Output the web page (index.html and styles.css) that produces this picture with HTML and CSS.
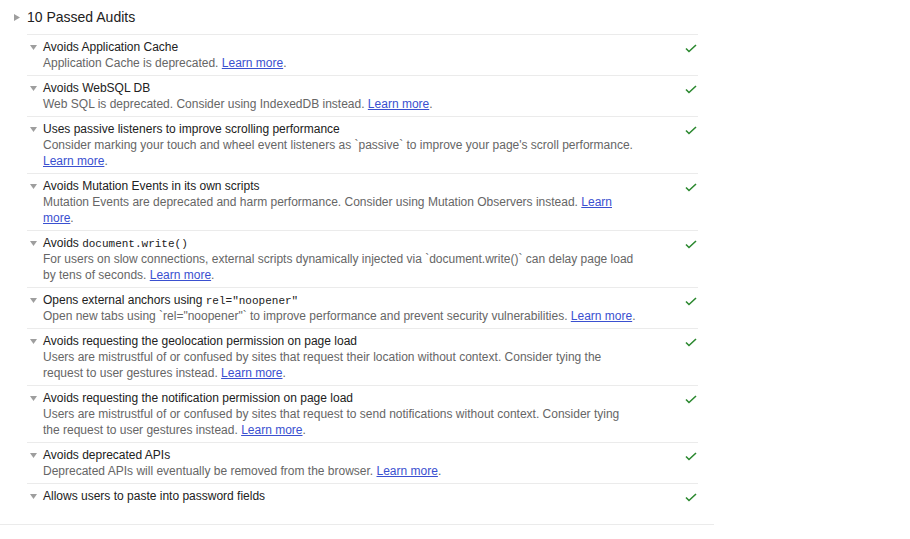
FILE: index.html
```html
<!DOCTYPE html>
<html>
<head>
<meta charset="utf-8">
<link rel="stylesheet" href="styles.css">
</head>
<body>
<div class="group">
  <div class="group-header">
    <svg class="tri-right" width="6" height="7" viewBox="0 0 6 7"><polygon points="0,0 6,3.5 0,7" fill="#9e9e9e"/></svg>
    <span class="group-title">10 Passed Audits</span>
  </div>
  <div class="audits">
    <div class="audit">
      <svg class="tri-down" width="7" height="5" viewBox="0 0 7 5"><polygon points="0,0 7,0 3.5,5" fill="#9e9e9e"/></svg>
      <div class="text">
        <div class="title">Avoids Application Cache</div>
        <div class="desc">Application Cache is deprecated. <a href="#">Learn more</a>.</div>
      </div>
      <svg class="check" width="12" height="9" viewBox="0 0 12 9"><path d="M1 4.5 L4 7.5 L11 1" fill="none" stroke="#2b882f" stroke-width="1.6"/></svg>
    </div>
    <div class="audit">
      <svg class="tri-down" width="7" height="5" viewBox="0 0 7 5"><polygon points="0,0 7,0 3.5,5" fill="#9e9e9e"/></svg>
      <div class="text">
        <div class="title">Avoids WebSQL DB</div>
        <div class="desc">Web SQL is deprecated. Consider using IndexedDB instead. <a href="#">Learn more</a>.</div>
      </div>
      <svg class="check" width="12" height="9" viewBox="0 0 12 9"><path d="M1 4.5 L4 7.5 L11 1" fill="none" stroke="#2b882f" stroke-width="1.6"/></svg>
    </div>
    <div class="audit">
      <svg class="tri-down" width="7" height="5" viewBox="0 0 7 5"><polygon points="0,0 7,0 3.5,5" fill="#9e9e9e"/></svg>
      <div class="text">
        <div class="title">Uses passive listeners to improve scrolling performance</div>
        <div class="desc">Consider marking your touch and wheel event listeners as `passive` to improve your page's scroll performance. <a href="#">Learn more</a>.</div>
      </div>
      <svg class="check" width="12" height="9" viewBox="0 0 12 9"><path d="M1 4.5 L4 7.5 L11 1" fill="none" stroke="#2b882f" stroke-width="1.6"/></svg>
    </div>
    <div class="audit">
      <svg class="tri-down" width="7" height="5" viewBox="0 0 7 5"><polygon points="0,0 7,0 3.5,5" fill="#9e9e9e"/></svg>
      <div class="text">
        <div class="title">Avoids Mutation Events in its own scripts</div>
        <div class="desc">Mutation Events are deprecated and harm performance. Consider using Mutation Observers instead. <a href="#">Learn more</a>.</div>
      </div>
      <svg class="check" width="12" height="9" viewBox="0 0 12 9"><path d="M1 4.5 L4 7.5 L11 1" fill="none" stroke="#2b882f" stroke-width="1.6"/></svg>
    </div>
    <div class="audit">
      <svg class="tri-down" width="7" height="5" viewBox="0 0 7 5"><polygon points="0,0 7,0 3.5,5" fill="#9e9e9e"/></svg>
      <div class="text">
        <div class="title">Avoids <code>document.write()</code></div>
        <div class="desc">For users on slow connections, external scripts dynamically injected via `document.write()` can delay page load by tens of seconds. <a href="#">Learn more</a>.</div>
      </div>
      <svg class="check" width="12" height="9" viewBox="0 0 12 9"><path d="M1 4.5 L4 7.5 L11 1" fill="none" stroke="#2b882f" stroke-width="1.6"/></svg>
    </div>
    <div class="audit">
      <svg class="tri-down" width="7" height="5" viewBox="0 0 7 5"><polygon points="0,0 7,0 3.5,5" fill="#9e9e9e"/></svg>
      <div class="text">
        <div class="title">Opens external anchors using <code>rel="noopener"</code></div>
        <div class="desc">Open new tabs using `rel="noopener"` to improve performance and prevent security vulnerabilities. <a href="#">Learn more</a>.</div>
      </div>
      <svg class="check" width="12" height="9" viewBox="0 0 12 9"><path d="M1 4.5 L4 7.5 L11 1" fill="none" stroke="#2b882f" stroke-width="1.6"/></svg>
    </div>
    <div class="audit">
      <svg class="tri-down" width="7" height="5" viewBox="0 0 7 5"><polygon points="0,0 7,0 3.5,5" fill="#9e9e9e"/></svg>
      <div class="text">
        <div class="title">Avoids requesting the geolocation permission on page load</div>
        <div class="desc">Users are mistrustful of or confused by sites that request their location without context. Consider tying the request to user gestures instead. <a href="#">Learn more</a>.</div>
      </div>
      <svg class="check" width="12" height="9" viewBox="0 0 12 9"><path d="M1 4.5 L4 7.5 L11 1" fill="none" stroke="#2b882f" stroke-width="1.6"/></svg>
    </div>
    <div class="audit">
      <svg class="tri-down" width="7" height="5" viewBox="0 0 7 5"><polygon points="0,0 7,0 3.5,5" fill="#9e9e9e"/></svg>
      <div class="text">
        <div class="title">Avoids requesting the notification permission on page load</div>
        <div class="desc">Users are mistrustful of or confused by sites that request to send notifications without context. Consider tying the request to user gestures instead. <a href="#">Learn more</a>.</div>
      </div>
      <svg class="check" width="12" height="9" viewBox="0 0 12 9"><path d="M1 4.5 L4 7.5 L11 1" fill="none" stroke="#2b882f" stroke-width="1.6"/></svg>
    </div>
    <div class="audit">
      <svg class="tri-down" width="7" height="5" viewBox="0 0 7 5"><polygon points="0,0 7,0 3.5,5" fill="#9e9e9e"/></svg>
      <div class="text">
        <div class="title">Avoids deprecated APIs</div>
        <div class="desc">Deprecated APIs will eventually be removed from the browser. <a href="#">Learn more</a>.</div>
      </div>
      <svg class="check" width="12" height="9" viewBox="0 0 12 9"><path d="M1 4.5 L4 7.5 L11 1" fill="none" stroke="#2b882f" stroke-width="1.6"/></svg>
    </div>
    <div class="audit">
      <svg class="tri-down" width="7" height="5" viewBox="0 0 7 5"><polygon points="0,0 7,0 3.5,5" fill="#9e9e9e"/></svg>
      <div class="text">
        <div class="title">Allows users to paste into password fields</div>
      </div>
      <svg class="check" width="12" height="9" viewBox="0 0 12 9"><path d="M1 4.5 L4 7.5 L11 1" fill="none" stroke="#2b882f" stroke-width="1.6"/></svg>
    </div>
  </div>
</div>
</body>
</html>
```

FILE: styles.css
```css
html, body {
  margin: 0;
  padding: 0;
  background: #ffffff;
}
body {
  font-family: "Liberation Sans", Arial, sans-serif;
  color: #212121;
}
.group {
  width: 714px;
  padding-bottom: 16px;
  border-bottom: 1px solid #ebebeb;
}
.group-header {
  display: flex;
  align-items: center;
  padding: 8px 0 0 14px;
  margin-bottom: 8px;
  height: 18px;
}
.tri-right {
  display: block;
  margin-right: 7px;
}
.group-title {
  font-size: 14px;
  line-height: 18px;
  color: #212121;
}
.audits {
  margin-left: 27px;
  width: 671px;
}
.audit {
  display: flex;
  align-items: flex-start;
  border-top: 1px solid #ebebeb;
  padding: 4px 1px 4px 3px;
  font-size: 12px;
  line-height: 16px;
}
.tri-down {
  display: block;
  flex: none;
  margin-top: 6px;
  margin-right: 6px;
}
.text {
  flex: 1;
}
.title {
  color: #212121;
}
.title code {
  font-family: "Liberation Mono", "DejaVu Sans Mono", monospace;
  font-size: 11px;
  line-height: 1;
}
.desc {
  color: #666666;
  max-width: 596px;
}
.desc a {
  color: #3a50d0;
  text-decoration: underline;
}
.check {
  display: block;
  flex: none;
  margin-top: 5px;
}
```
